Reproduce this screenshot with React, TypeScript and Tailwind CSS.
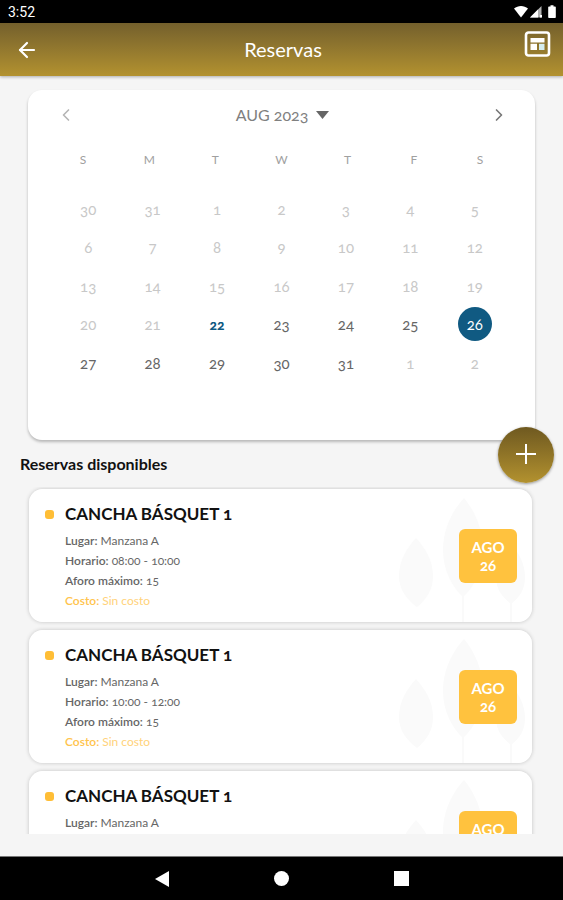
import { ArrowLeft, ChevronLeft, ChevronRight } from "lucide-react";

type DayState = "off" | "today" | "open" | "selected";
type Day = { label: number; state: DayState };

const weekdays = ["S", "M", "T", "W", "T", "F", "S"];

const stateFor = (date: number): DayState => {
  if (date < 22) return "off";
  if (date === 22) return "today";
  if (date === 26) return "selected";
  return "open";
};

const days: Day[] = [
  { label: 30, state: "off" },
  { label: 31, state: "off" },
  ...Array.from({ length: 31 }, (_, i) => ({ label: i + 1, state: stateFor(i + 1) })),
  { label: 1, state: "off" },
  { label: 2, state: "off" },
];

const dayStyles: Record<DayState, string> = {
  off: "text-[#c8c8c8]",
  today: "text-[14px] font-black text-[#105a82]",
  open: "text-[#666]",
  selected: "bg-[#105a82] text-white",
};

const bookings = [
  { id: 1, schedule: "08:00 - 10:00" },
  { id: 2, schedule: "10:00 - 12:00" },
  { id: 3, schedule: "12:00 - 14:00" },
];

function StatusBar() {
  return (
    <div className="flex h-[23px] shrink-0 items-center justify-between bg-black pr-[7px] pl-2 text-white">
      <span className="font-['Roboto',sans-serif] text-[14px] leading-4">3:52</span>
      <svg width="42" height="14" viewBox="0 0 42 14" fill="currentColor" aria-hidden="true">
        <path d="M0 3.6C4 .2 10 .2 14 3.6L7 12.5z" />
        <path d="M27.5 1v11.5H16z" opacity=".7" />
        <path d="M24 4.5V12.500H16z" />
        <path d="M26 10h2v2.500h-2z" />
        <path d="M35 1.500h1.500V.2h3v1.300H41a.8.8 0 0 1 .8.8v10a.8.8 0 0 1-.8.8h-6a.8.8 0 0 1-.8-.8v-10a.8.8 0 0 1 .8-.8z" />
      </svg>
    </div>
  );
}

function Header() {
  return (
    <header className="z-10 grid h-[53px] shrink-0 grid-cols-[1fr_auto_1fr] items-center bg-linear-to-b from-[#74602c] to-[#b3922f] pr-3 pl-[15px] text-white shadow-[0_1px_3px_rgba(0,0,0,0.3)]">
      <button aria-label="Volver" className="justify-self-start">
        <ArrowLeft size={24} strokeWidth={2.2} />
      </button>
      <h1 className="pb-0.5 text-[20px] leading-6">Reservas</h1>
      <button aria-label="Ver calendario" className="mb-3 justify-self-end">
        <svg width="28" height="28" viewBox="0 0 28 28" fill="none" aria-hidden="true">
          <rect x="3" y="2.500" width="23" height="23" rx="2.500" stroke="#fff" strokeWidth="2.600" />
          <path d="M7.500 8h14v4.500h-14zM7.500 13.800h6.500V20H7.500z" fill="#fff" />
          <path d="M16 13.800h5.500V20H16z" fill="#d5edf0" />
        </svg>
      </button>
    </header>
  );
}

function Calendar() {
  return (
    <section className="mx-7 mt-3.5 flex h-[350px] shrink-0 flex-col rounded-[14px] bg-white shadow-[0_2px_3px_rgba(0,0,0,0.25)]">
      <div className="flex h-[50px] items-center justify-between pr-[26px] pl-7">
        <button aria-label="Mes anterior" className="text-[#b5b5b5]">
          <ChevronLeft size={20} strokeWidth={2} />
        </button>
        <button className="flex items-center gap-2 text-[16px] leading-5 text-[#808080] oldstyle-nums">
          AUG 2023
          <svg width="13" height="8" viewBox="0 0 13 8" fill="#666" aria-hidden="true">
            <path d="M0 0h13L6.500 8z" />
          </svg>
        </button>
        <button aria-label="Mes siguiente" className="text-[#777]">
          <ChevronRight size={20} strokeWidth={2} />
        </button>
      </div>
      <div className="mx-[22px] grid h-10 grid-cols-7 items-center text-center text-[12px] leading-4 text-[#a0a0a0]">
        {weekdays.map((day, i) => (
          <span key={i}>{day}</span>
        ))}
      </div>
      <div className="mx-7 mt-2.5 grid h-48 grid-cols-7 grid-rows-5 place-items-center text-[15px] oldstyle-nums">
        {days.map((day, i) => (
          <button
            key={i}
            className={`flex size-[34px] items-center justify-center rounded-full ${dayStyles[day.state]}`}
          >
            {day.label}
          </button>
        ))}
      </div>
    </section>
  );
}

function Leaves() {
  return (
    <svg
      className="absolute right-0 bottom-0"
      width="140"
      height="132"
      viewBox="0 0 140 132"
      fill="#fafafa"
      aria-hidden="true"
    >
      <path d="M72 8c10 12 19 30 19 52 0 20-8 36-20 47-11-10-20-27-20-47 0-22 10-40 21-52z" />
      <path d="M24 48c9 10 17 22 17 38 0 13-6 23-16 31-11-8-18-18-18-31 0-16 8-28 17-38z" />
      <path d="M119 54c8 9 14 20 14 33 0 12-5 20-14 27-9-7-15-15-15-27 0-13 7-24 15-33z" />
      <path d="M70 100h2v32h-2zM118 110h2v22h-2z" />
    </svg>
  );
}

function BookingCard({ schedule }: { schedule: string }) {
  return (
    <article className="relative flex h-[133px] shrink-0 overflow-hidden rounded-[14px] bg-white">
      <Leaves />
      <div className="relative flex flex-1 items-center pr-[15px] pl-4">
        <div className="flex flex-1 gap-[11px] self-start pt-3.5">
          <span className="mt-[7px] size-[9px] rounded-[3px] bg-[#ffbe36]" />
          <div className="text-[12px] leading-5 text-[#666] oldstyle-nums">
            <h3 className="mb-1.5 text-[17px] leading-[22px] font-bold text-[#111]">CANCHA BÁSQUET 1</h3>
            <p><b className="font-semibold">Lugar:</b> Manzana A</p>
            <p><b className="font-semibold">Horario:</b> {schedule}</p>
            <p><b className="font-semibold">Aforo máximo:</b> 15</p>
            <p className="text-[#ffd27a]"><b className="font-semibold text-[#ffc44d]">Costo:</b> Sin costo</p>
          </div>
        </div>
        <time
          dateTime="2023-08-26"
          className="flex h-[54px] w-[58px] flex-col justify-center rounded-md bg-[#ffc23e] text-center text-[15px] leading-[18px] font-bold text-white oldstyle-nums"
        >
          <span>AGO</span>
          <span>26</span>
        </time>
      </div>
    </article>
  );
}

function NavBar() {
  return (
    <nav className="flex h-11 shrink-0 items-center justify-center gap-[92px] border-t border-[#777] bg-black text-white">
      <button aria-label="Atrás" className="flex w-7 justify-center">
        <svg width="14" height="16" viewBox="0 0 14 16" fill="currentColor" aria-hidden="true">
          <path d="M14 0v16L0 8z" />
        </svg>
      </button>
      <button aria-label="Inicio" className="flex w-7 justify-center">
        <span className="size-[15px] rounded-full bg-white" />
      </button>
      <button aria-label="Recientes" className="flex w-7 justify-center">
        <span className="size-[15px] bg-white" />
      </button>
    </nav>
  );
}

export default function App() {
  return (
    <div className="flex h-screen flex-col overflow-hidden bg-[#f5f5f5] font-['Lato','Open_Sans',sans-serif]">
      <StatusBar />
      <Header />
      <main className="flex min-h-0 flex-1 flex-col pb-[22px]">
        <Calendar />
        <div className="relative flex h-[47px] shrink-0 items-center px-5">
          <h2 className="text-[16px] leading-5 font-bold text-[#111]">Reservas disponibles</h2>
          <button
            aria-label="Nueva reserva"
            className="absolute -top-[13px] right-[9px] z-10 flex size-14 items-center justify-center rounded-full bg-linear-to-b from-[#6f5920] to-[#b3922f] shadow-[0_1px_3px_rgba(0,0,0,0.4)]"
          >
            <svg width="22" height="22" viewBox="0 0 22 22" stroke="#fff" strokeWidth="2" aria-hidden="true">
              <path d="M11 0v20M1 10h20" />
            </svg>
          </button>
        </div>
        <div className="flex min-h-0 flex-1 flex-col gap-2 overflow-y-auto pt-0.5 pr-[31px] pl-[29px] [scrollbar-width:none]">
          {bookings.map((booking) => (
            <div key={booking.id} className="shrink-0 rounded-[14px] shadow-[0_0_4px_rgba(0,0,0,0.2)]">
              <BookingCard schedule={booking.schedule} />
            </div>
          ))}
        </div>
      </main>
      <NavBar />
    </div>
  );
}
